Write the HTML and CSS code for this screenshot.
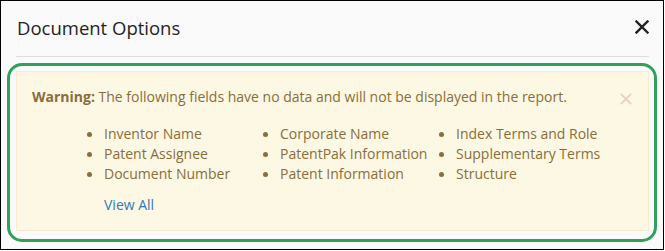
FILE: index.html
```html
<!DOCTYPE html>
<html lang="en">
<head>
<meta charset="utf-8">
<title>Document Options</title>
<link rel="stylesheet" href="styles.css">
</head>
<body>
<div class="modal">
  <div class="modal-header">
    <h4 class="modal-title">Document Options</h4>
    <button class="close-btn" aria-label="Close">
      <svg width="14" height="14" viewBox="0 0 14 14"><path d="M1.5 1.5 L12.5 12.5 M12.5 1.5 L1.5 12.5" stroke="#222" stroke-width="2.4" stroke-linecap="square" fill="none"/></svg>
    </button>
  </div>
  <div class="highlight">
    <div class="alert">
      <div class="alert-head">
        <p class="alert-text"><strong>Warning:</strong> The following fields have no data and will not be displayed in the report.</p>
        <button class="alert-close" aria-label="Dismiss">
          <svg width="12" height="12" viewBox="0 0 12 12"><path d="M0.8 0.8 L11.2 11.2 M11.2 0.8 L0.8 11.2" stroke="#e9d0bf" stroke-width="1.8" fill="none"/></svg>
        </button>
      </div>
      <ul class="fields">
        <li>Inventor Name</li>
        <li>Patent Assignee</li>
        <li>Document Number</li>
        <li>Corporate Name</li>
        <li>PatentPak Information</li>
        <li>Patent Information</li>
        <li>Index Terms and Role</li>
        <li>Supplementary Terms</li>
        <li>Structure</li>
      </ul>
      <a class="view-all" href="#">View All</a>
    </div>
  </div>
</div>
</body>
</html>
```
FILE: styles.css
```css
* { box-sizing: border-box; }
html, body { margin: 0; padding: 0; background: #ffffff; }
body { font-family: "Open Sans", "Liberation Sans", sans-serif; }

.modal {
  width: 664px;
  height: 250px;
  border: 1px solid #000;
  background: #fafafa;
  padding: 0 14px 0 15px;
}

.modal-header {
  display: flex;
  align-items: flex-start;
  justify-content: space-between;
  padding: 14px 0 15px;
  border-bottom: 1px solid #dedede;
}
.modal-title {
  margin: 0 0 0 1px;
  font-size: 18.5px;
  line-height: 26px;
  font-weight: 500;
  color: #1f1f24;
}
.close-btn {
  border: 0;
  background: none;
  padding: 0;
  margin-top: 5px;
  width: 14px;
  height: 14px;
  display: flex;
}

.highlight {
  margin: 6px -8px 0 -9px;
  border: 3px solid #2fa15a;
  border-radius: 15px;
  padding: 5px 5px 8px 6px;
}

.alert {
  background: #fcf8e3;
  border: 1px solid #faebcc;
  color: #8a6d3b;
  padding: 15px;
  font-size: 14px;
  line-height: 20px;
}
.alert-head {
  display: flex;
  justify-content: space-between;
  align-items: flex-start;
}
.alert-text { margin: 0; }
.alert-text strong { font-weight: 700; }
.alert-close {
  border: 0;
  background: none;
  padding: 0;
  margin: 6px 1px 0 0;
  width: 12px;
  height: 12px;
  display: flex;
}

.fields {
  list-style: none;
  margin: 17px 0 0;
  padding: 0 0 0 55px;
  display: grid;
  grid-template-columns: 176px 176px 176px;
  grid-template-rows: repeat(3, 20px);
  grid-auto-flow: column;
}
.fields li {
  display: flex;
  align-items: center;
  white-space: nowrap;
}
.fields li::before {
  content: "";
  flex: none;
  width: 5px;
  height: 5px;
  border-radius: 50%;
  background: #8a6d3b;
  margin-right: 12px;
}

.view-all {
  display: block;
  margin: 11px 0 0 72px;
  color: #337ab7;
  text-decoration: none;
  width: max-content;
}
```
